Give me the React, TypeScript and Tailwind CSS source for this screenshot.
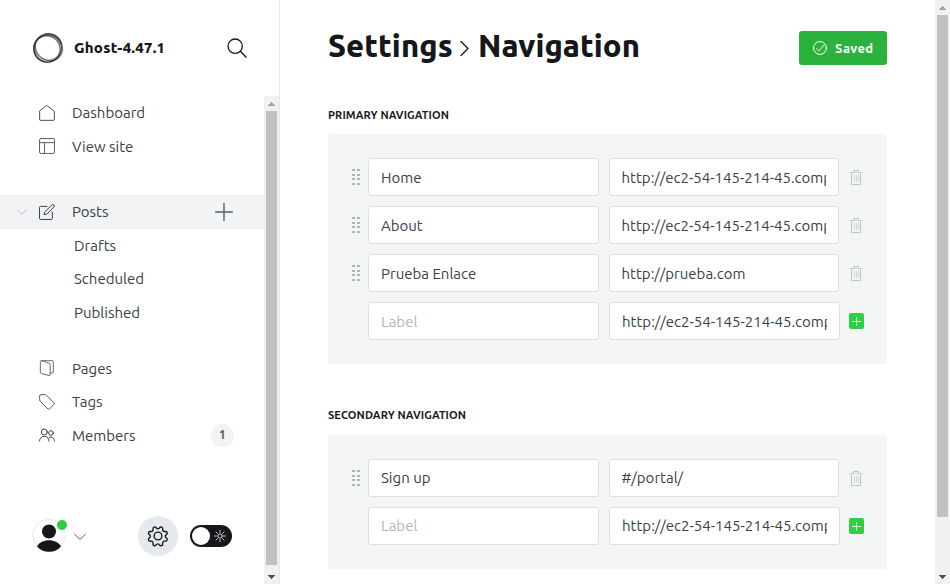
import React from "react";

type IconProps = { className?: string; children: React.ReactNode; box?: string; w?: number };

function Icon({ className = "", children, box = "0 0 24 24", w = 1.5 }: IconProps) {
  return (
    <svg viewBox={box} className={`shrink-0 ${className}`} fill="none" stroke="currentColor" strokeWidth={w} strokeLinecap="round" strokeLinejoin="round">
      {children}
    </svg>
  );
}

function Logo() {
  return (
    <svg viewBox="0 0 32 32" className="size-8 shrink-0" fill="none" stroke="#15171a">
      <ellipse cx="15.6" cy="16.4" rx="14" ry="13.6" strokeWidth="1.2" opacity=".6" />
      <ellipse cx="15" cy="17" rx="13" ry="13.4" strokeWidth="1.5" opacity=".6" transform="rotate(-35 15 17)" />
      <ellipse cx="17" cy="15.2" rx="14.2" ry="12.8" strokeWidth="1.2" opacity=".5" transform="rotate(40 17 15.2)" />
      <ellipse cx="16.4" cy="15" rx="13" ry="13.4" strokeWidth="1" opacity=".45" transform="rotate(60 16.4 15)" />
      <path d="M13 2.400C20 .400 27 4 29 12" strokeWidth="2.400" opacity=".35" />
      <path d="M2.400 13C1.400 19 4 26 10 29" strokeWidth="1.600" opacity=".35" />
    </svg>
  );
}

function Scrollbar({ thumb }: { thumb: string }) {
  return (
    <div className="flex w-[15px] shrink-0 flex-col items-center justify-between bg-[#f1f1f1]">
      <svg viewBox="0 0 15 15" className="h-[15px] w-[15px] shrink-0" shapeRendering="crispEdges">
        <path d="M4 10h7L7.5 6z" fill="#a3a3a3" />
      </svg>
      <div className="flex w-[11px] flex-1 flex-col">
        <div className={`w-[11px] bg-[#c1c1c1] ${thumb}`} />
      </div>
      <svg viewBox="0 0 15 15" className="h-[15px] w-[15px] shrink-0" shapeRendering="crispEdges">
        <path d="M4 6h7L7.5 10z" fill="#505050" />
      </svg>
    </div>
  );
}

function NavItem({ icon, label }: { icon: React.ReactNode; label: string }) {
  return (
    <div className="flex h-[33.5px] shrink-0 items-center pl-[39px]">
      {icon}
      <span className="ml-[17px] pt-px">{label}</span>
    </div>
  );
}

function SubItem({ label }: { label: string }) {
  return <div className="flex h-[33.5px] shrink-0 items-center pl-[74px]">{label}</div>;
}

function Sidebar() {
  return (
    <aside className="flex w-[280px] shrink-0 flex-col border-r border-[#e5e9ed]">
      <div className="flex h-24 shrink-0 items-center pl-8">
        <Logo />
        <span className="ml-[10px] w-[153px] text-[15px] font-extrabold tracking-[0.22px] text-[#15171a]">Ghost-4.47.1</span>
        <Icon className="size-5 text-[#15171a]" w={1.6}>
          <circle cx="9.8" cy="9.8" r="8.6" />
          <path d="M16 16l7 7" />
        </Icon>
      </div>
      <div className="flex min-h-0 flex-1">
        <div className="flex min-w-0 flex-1 flex-col text-[15px] text-[#394047]">
          <NavItem
            label="Dashboard"
            icon={<Icon className="size-4" w={1.4}><path d="M1 9.5V22a1 1 0 0 0 1 1h20a1 1 0 0 0 1-1V9.5L12 .8z" /></Icon>}
          />
          <NavItem
            label="View site"
            icon={<Icon className="size-4 text-[#596067]" w={1.5}><rect x=".8" y=".8" width="22.4" height="22.4" rx="2" /><path d="M.8 7h22.4M8.3 7v16" /></Icon>}
          />
          <div className="mt-8 flex h-[34px] shrink-0 items-center bg-[#f1f3f5] pl-[17px]">
            <Icon className="h-[10px] w-[10px] text-[#aeb7c1]" w={2}><path d="M0 7l11 10L22 7" /></Icon>
            <Icon className="ml-3 size-4" w={1.5}>
              <path d="M12 3.6H2.3A1.5 1.5 0 0 0 .8 5.100v16.600a1.500 1.500 0 0 0 1.500 1.500h16.200a1.500 1.500 0 0 0 1.500-1.500V12" />
              <path d="M9 11.500 19.300 1.500a2 2 0 0 1 3 3L12.500 14.500 8 16z" />
            </Icon>
            <span className="ml-[17px] w-[143px]">Posts</span>
            <Icon className="size-[18px] text-[#596067]" box="0 0 18 18" w={1.4}><path d="M9 .5v17M.5 9h17" /></Icon>
          </div>
          <SubItem label="Drafts" />
          <SubItem label="Scheduled" />
          <SubItem label="Published" />
          <div className="h-[22px] shrink-0" />
          <NavItem
            label="Pages"
            icon={
              <Icon className="size-4 text-[#596067]" w={1.4}>
                <path d="M3.500 1H20a1.500 1.500 0 0 1 1.500 1.500V18a1.500 1.500 0 0 1-1.500 1.500h-2.500" />
                <path d="M3.500 1A1.500 1.500 0 0 0 2 2.500v15.800a2 2 0 0 0 1.400 1.900l11.500 3a1.500 1.500 0 0 0 1.900-1.500V6.500a2 2 0 0 0-1.500-1.900z" />
              </Icon>
            }
          />
          <NavItem
            label="Tags"
            icon={<Icon className="size-4" w={1.3}><path d="M1 2.500A1.500 1.500 0 0 1 2.500 1H9.500a2 2 0 0 1 1.400.6L22.600 13.300a1.500 1.500 0 0 1 0 2L15.500 22.500a1.500 1.500 0 0 1-2 0L1.600 10.600A2 2 0 0 1 1 9.200z" /></Icon>}
          />
          <div className="flex h-[33.5px] shrink-0 items-center pl-[39px]">
            <Icon className="size-4" w={1.5}>
              <circle cx="8" cy="7.500" r="4.500" /><circle cx="18" cy="9" r="3.500" />
              <path d="M.8 21c0-4 3-7 7.200-7s7 3 7 7M15.500 15.500c4-1.500 7.700 1 7.700 5.500" />
            </Icon>
            <span className="ml-[17px] w-[139px] pt-px">Members</span>
            <span className="flex h-[23px] w-[23px] items-center justify-center rounded-full bg-[#f1f3f5] text-[12px] font-semibold text-[#5b6167]">1</span>
          </div>
          <div className="mt-auto mb-7 flex h-10 items-center pl-8">
            <div className="relative size-[34px]">
              <svg viewBox="0 0 34 34" className="size-[34px]">
                <circle cx="17" cy="16.500" r="16.200" fill="#fff" stroke="#e5e9ed" />
                <circle cx="17" cy="12.500" r="7" fill="#15171a" />
                <path d="M5 27.500c2-4 7-6.200 12-6.200S27 23.500 29 27.500c-3 3.500-7 5.200-12 5.200S8 31 5 27.500z" fill="#15171a" />
              </svg>
              <span className="absolute top-[1px] left-[25px] size-[10px] rounded-full bg-[#30cf43]" />
            </div>
            <Icon className="ml-2 h-3 w-3 text-[#596067]" w={2}><path d="M1 8.500l11 10 11-10" /></Icon>
            <div className="ml-[52px] flex size-10 items-center justify-center rounded-full bg-[#e5e9ed]">
              <Icon className="size-[22px] text-[#15171a]" w={1.5}>
                <circle cx="12" cy="12" r="4.200" />
                <path
                  transform="rotate(22.500 12 12)"
                  d="M10.300 2.600a1.800 1.800 0 0 1 3.400 0l.4 1.200a1.800 1.800 0 0 0 2.500 1l1.100-.5a1.800 1.800 0 0 1 2.400 2.400l-.5 1.100a1.800 1.800 0 0 0 1 2.500l1.100.4a1.800 1.800 0 0 1 0 3.400l-1.100.4a1.800 1.800 0 0 0-1 2.500l.5 1.100a1.800 1.800 0 0 1-2.400 2.400l-1.100-.5a1.800 1.800 0 0 0-2.500 1l-.4 1.200a1.800 1.800 0 0 1-3.400 0L9.900 21a1.800 1.800 0 0 0-2.500-1l-1.100.5a1.800 1.800 0 0 1-2.400-2.400l.5-1.100a1.800 1.800 0 0 0-1-2.500l-1.100-.4a1.800 1.800 0 0 1 0-3.400l1.100-.4a1.800 1.800 0 0 0 1-2.500l-.5-1.100a1.800 1.800 0 0 1 2.400-2.400l1.100.5a1.800 1.800 0 0 0 2.500-1z"
                />
              </Icon>
            </div>
            <div className="ml-3 flex h-[22px] w-[42px] items-center justify-between rounded-full bg-[#15171a] pr-[6px] pl-[2px]">
              <span className="size-[18px] rounded-full bg-white" />
              <Icon className="size-3 text-[#e8e8e8]" w={1.7}>
                <circle cx="12" cy="12" r="4.200" />
                <path d="M12 1v4M12 19v4M1 12h4M19 12h4M4 4l3 3M17 17l3 3M4 20l3-3M17 7l3-3" />
              </Icon>
            </div>
          </div>
        </div>
        <Scrollbar thumb="h-[454px]" />
      </div>
    </aside>
  );
}

const FIELD =
  "h-[38px] shrink-0 rounded-[3px] border border-[#dddfe0] bg-white px-3 text-[15px] text-[#394047] outline-none placeholder:text-[#aeb7c1]";

function Row({ label = "", url, draft = false, pad = "pt-px" }: { label?: string; url: string; draft?: boolean; pad?: string }) {
  return (
    <div className="flex h-[38px] items-center">
      <div className="w-4 shrink-0">
        {!draft && (
          <svg viewBox="0 0 8 16" className="h-4 w-2" fill="#abb4be" shapeRendering="crispEdges">
            {[0, 5].map((x) => [0, 5, 9, 14].map((y) => <rect key={`${x}-${y}`} x={x} y={y} width="3" height="2" />))}
          </svg>
        )}
      </div>
      <input className={`${FIELD} ${pad} w-[231px]`} placeholder="Label" defaultValue={label} />
      <input className={`${FIELD} ${pad} ml-[10px] ${draft ? "w-[231px]" : "w-[230px] pl-[11.5px] pr-[12.5px]"}`} defaultValue={url} />
      {draft ? (
        <span className="ml-[9px] flex h-4 w-[15px] shrink-0 items-center justify-center rounded-[2px] bg-[#30cf43]">
          <svg viewBox="0 0 15 16" className="h-4 w-[15px]" stroke="#d8f7dc" strokeWidth="1">
            <path d="M7.500 4v9M3 8.500h9" />
          </svg>
        </span>
      ) : (
        <svg viewBox="0 0 14 15" className="ml-[10px] h-[15px] w-[14px] shrink-0" fill="none" stroke="#bcc4cb" strokeWidth="1">
          <path d="M.5 2.500h13M5.500 5v7M7.500 5v7M9.500 5v7" stroke="#cfd5da" />
          <path d="M4.500 2.500v-2h5v2M2.500 2.500v12h9v-12" />
        </svg>
      )}
    </div>
  );
}

const BASE = "http://ec2-54-145-214-45.compute-1.amazonaws.com";

function Main() {
  return (
    <main className="min-w-0 flex-1 pl-12">
      <div className="flex h-24 w-[559px] items-center justify-between">
        <h1 className="flex items-center pb-[5px] text-[31px] leading-8 font-extrabold text-[#15171a]">
          <span className="w-[132px] tracking-[0.05px]">Settings</span>
          <Icon className="mt-[5px] h-4 w-[9px]" box="0 0 9 16" w={1.3}><path d="M1 1.500l7 7-7 7" /></Icon>
          <span className="ml-[9px] tracking-[0.05px]">Navigation</span>
        </h1>
        <button className="flex h-[34px] w-[88px] items-center rounded-[3px] bg-[#2bb23c] pl-[14px] text-[13px] font-bold text-white">
          <Icon className="size-[14px]" w={1.7}><circle cx="12" cy="12" r="11" /><path d="M6 13l4 4 8.500-9.500" /></Icon>
          <span className="ml-2 pt-px tracking-[0.4px]">Saved</span>
        </button>
      </div>
      <h4 className="mt-[9px] flex h-5 items-center text-[11px] font-semibold tracking-[0.1px] text-[#15171a]">PRIMARY NAVIGATION</h4>
      <section className="mt-[9px] flex h-[230px] w-[559px] flex-col gap-[10px] rounded-[3px] bg-[#f4f6f6] p-6">
        <Row label="Home" url={BASE} />
        <Row label="About" url={BASE} />
        <Row label="Prueba Enlace" url="http://prueba.com" />
        <Row url={BASE} draft />
      </section>
      <h4 className="mt-[41px] flex h-5 items-center text-[11px] font-semibold tracking-[0.1px] text-[#15171a]">SECONDARY NAVIGATION</h4>
      <section className="mt-[10px] flex h-[134px] w-[559px] flex-col gap-[10px] rounded-[3px] bg-[#f4f6f6] p-6">
        <Row label="Sign up" url="#/portal/" pad="pb-px" />
        <Row url={BASE} draft pad="pb-px" />
      </section>
    </main>
  );
}

export default function App() {
  return (
    <div className="flex h-[584px] w-[950px] overflow-hidden bg-white font-['Ubuntu','Noto_Sans',sans-serif]">
      <Sidebar />
      <Main />
      <Scrollbar thumb="h-[502px]" />
    </div>
  );
}
